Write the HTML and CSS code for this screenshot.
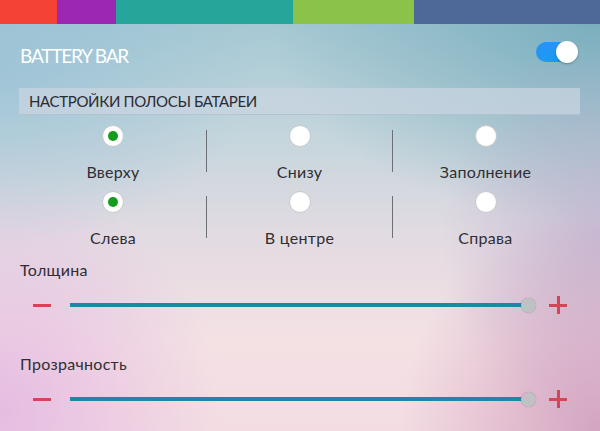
FILE: index.html
```
<!DOCTYPE html>
<html lang="ru">
<head>
<meta charset="utf-8">
<title>Battery Bar</title>
<link rel="stylesheet" href="styles.css">
</head>
<body>
<div class="screen">
  <div class="stripes">
    <div class="stripe s-red"></div>
    <div class="stripe s-purple"></div>
    <div class="stripe s-teal"></div>
    <div class="stripe s-green"></div>
    <div class="stripe s-blue"></div>
  </div>
  <div class="header">
    <div class="title">BATTERY BAR</div>
    <div class="toggle"><div class="toggle-track"></div><div class="toggle-knob"></div></div>
  </div>
  <div class="section-title">НАСТРОЙКИ ПОЛОСЫ БАТАРЕИ</div>
  <div class="options">
    <div class="opt"><div class="radio checked"><div class="dot"></div></div><div class="opt-label">Вверху</div></div>
    <div class="divider"></div>
    <div class="opt"><div class="radio"></div><div class="opt-label">Снизу</div></div>
    <div class="divider"></div>
    <div class="opt"><div class="radio"></div><div class="opt-label">Заполнение</div></div>
  </div>
  <div class="options row2">
    <div class="opt"><div class="radio checked"><div class="dot"></div></div><div class="opt-label">Слева</div></div>
    <div class="divider"></div>
    <div class="opt"><div class="radio"></div><div class="opt-label">В центре</div></div>
    <div class="divider"></div>
    <div class="opt"><div class="radio"></div><div class="opt-label">Справа</div></div>
  </div>
  <div class="setting first">
    <div class="setting-label">Толщина</div>
    <div class="slider">
      <div class="minus"></div>
      <div class="track"><div class="line"></div><div class="knob"></div></div>
      <div class="plus"></div>
    </div>
  </div>
  <div class="setting second">
    <div class="setting-label">Прозрачность</div>
    <div class="slider">
      <div class="minus"></div>
      <div class="track"><div class="line"></div><div class="knob"></div></div>
      <div class="plus"></div>
    </div>
  </div>
</div>
</body>
</html>
```
FILE: styles.css
```
html, body {
  margin: 0;
  padding: 0;
}
body {
  width: 600px;
  height: 431px;
  overflow: hidden;
  font-family: "Lato", "Noto Sans", sans-serif;
  color: #2e2e33;
}
.screen {
  width: 600px;
  height: 431px;
  background:
    radial-gradient(ellipse 220px 230px at 0% 95%, rgba(226, 180, 226, 0.8), rgba(226, 180, 226, 0) 100%),
    radial-gradient(ellipse 200px 220px at 100% 100%, rgba(205, 150, 185, 0.8), rgba(205, 150, 185, 0) 100%),
    radial-gradient(ellipse 160px 200px at 100% 55%, rgba(180, 165, 200, 0.6), rgba(180, 165, 200, 0) 100%),
    radial-gradient(ellipse 330px 200px at 100% 5%, rgba(112, 168, 184, 0.8), rgba(112, 168, 184, 0) 100%),
    radial-gradient(ellipse 260px 180px at 0% 15%, rgba(150, 192, 214, 0.7), rgba(150, 192, 214, 0) 100%),
    linear-gradient(to bottom, #9fc6d2 0%, #c3d5dc 30%, #e3dbe2 55%, #f4e1e4 80%, #f3dde2 100%);
}
.stripes {
  display: flex;
  height: 24px;
}
.stripe { height: 100%; }
.s-red { width: 57px; background: #f44336; }
.s-purple { width: 59px; background: #9c27b0; }
.s-teal { width: 177px; background: #26a69a; }
.s-green { width: 121px; background: #8bc34a; }
.s-blue { flex: 1; background: #4e6898; }

.header {
  height: 64px;
  display: flex;
  align-items: center;
  justify-content: space-between;
  padding: 0 22px 0 20px;
}
.title {
  color: #ffffff;
  font-size: 19px;
  letter-spacing: -1.2px;
  margin-top: -1px;
}
.toggle {
  position: relative;
  width: 42px;
  height: 22px;
  display: flex;
  align-items: center;
  margin-top: -8px;
}
.toggle-track {
  width: 34px;
  height: 20px;
  border-radius: 10px;
  background: #2196f3;
}
.toggle-knob {
  position: absolute;
  right: 0;
  top: 0;
  width: 22px;
  height: 22px;
  border-radius: 50%;
  background: #ffffff;
  box-shadow: 0 1px 2px rgba(0, 60, 40, 0.35);
}
.section-title {
  margin: 0 20px 0 19px;
  height: 26px;
  line-height: 27px;
  padding-left: 10px;
  background: rgba(200, 212, 224, 0.75);
  border-bottom: 1px solid rgba(160, 180, 195, 0.5);
  font-size: 15px;
  letter-spacing: -0.35px;
  color: #2a2c33;
}
.options {
  display: grid;
  grid-template-columns: 186px 1px 185px 1px 185px;
  margin: 10px 22px 0 20px;
}
.options.row2 {
  margin-top: 10px;
}
.opt {
  display: flex;
  flex-direction: column;
  align-items: center;
}
.divider {
  background: #6d6f76;
  margin: 5px 0 9px;
}
.radio {
  width: 20px;
  height: 20px;
  border-radius: 50%;
  background: #ffffff;
  border: 1px solid #c7c9cc;
  display: flex;
  align-items: center;
  justify-content: center;
}
.dot {
  width: 10px;
  height: 10px;
  border-radius: 50%;
  background: #149c1c;
}
.opt-label {
  margin-top: 16px;
  font-size: 16px;
  letter-spacing: 0.3px;
  line-height: 18px;
  height: 18px;
}
.setting {
  padding: 0 0 0 20px;
}
.setting.first { margin-top: 14px; }
.setting.second { margin-top: 40px; }
.setting-label {
  font-size: 16px;
  letter-spacing: 0.3px;
  line-height: 18px;
}
.slider {
  display: flex;
  align-items: center;
  height: 20px;
  margin-top: 16px;
  padding: 0 33px 0 13px;
}
.minus {
  width: 18px;
  height: 3px;
  background: #d64557;
}
.track {
  flex: 1;
  display: flex;
  align-items: center;
  margin: 0 13px 0 19px;
}
.line {
  flex: 1;
  height: 4px;
  background: #1b88a6;
}
.knob {
  width: 15px;
  height: 15px;
  border-radius: 50%;
  background: #bfc1c4;
  margin-left: -7px;
  box-shadow: 0 0 1px rgba(0, 0, 0, 0.3);
}
.plus {
  width: 18px;
  height: 18px;
  background:
    linear-gradient(#d64557, #d64557) center / 18px 3px no-repeat,
    linear-gradient(#d64557, #d64557) center / 3px 18px no-repeat;
}
```
